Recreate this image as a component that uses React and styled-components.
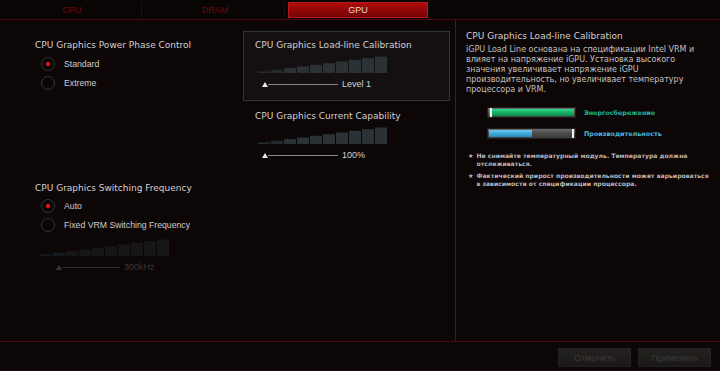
import React from "react";
import styled, { createGlobalStyle } from "styled-components";

const Global = createGlobalStyle`
  html, body {
    margin: 0;
    padding: 0;
    background: #0d0607;
  }
`;

const Screen = styled.div`
  width: 720px;
  height: 371px;
  background: #0d0607;
  display: flex;
  flex-direction: column;
  font-family: "Liberation Sans", Arial, sans-serif;
  overflow: hidden;
`;

const TabBar = styled.div`
  height: 20px;
  box-sizing: border-box;
  padding: 2px 0 0 2px;
  display: flex;
  gap: 3px;
  background: #090505;
  border-bottom: 1px solid #4a0a0b;
  flex-shrink: 0;
`;

const Tab = styled.div`
  width: 140px;
  height: 16px;
  box-sizing: border-box;
  display: flex;
  align-items: center;
  justify-content: center;
  font-size: 9px;
  color: ${(p) => (p.$active ? "#e6d6d6" : "#6a0b0c")};
  background: ${(p) =>
    p.$active ? "linear-gradient(180deg, #b00a0b 0%, #8c0607 60%, #760506 100%)" : "transparent"};
  border: 1px solid ${(p) => (p.$active ? "#b8191a" : "transparent")};
  border-right: 1px solid ${(p) => (p.$active ? "#b8191a" : "#181212")};
`;

const Main = styled.div`
  flex: 1;
  display: flex;
  min-height: 0;
`;

const Settings = styled.div`
  width: 456px;
  box-sizing: border-box;
  flex-shrink: 0;
  border-right: 1px solid #2a2626;
  display: grid;
  grid-template-columns: 243px 1fr;
`;

const Column = styled.div`
  display: flex;
  flex-direction: column;
  padding: ${(p) => p.$pad};
`;

const Group = styled.div`
  display: flex;
  flex-direction: column;
  margin-top: ${(p) => p.$top || 0}px;
`;

const Title = styled.div`
  font-family: "DejaVu Sans", Verdana, sans-serif;
  font-size: 9px;
  line-height: 12px;
  color: #d4d0d0;
  white-space: nowrap;
`;

const RadioList = styled.div`
  display: flex;
  flex-direction: column;
  gap: 5px;
  margin-top: ${(p) => p.$top}px;
  padding-left: 6px;
`;

const RadioRow = styled.label`
  display: flex;
  align-items: center;
  gap: 9px;
  height: 14px;
  font-size: 8.7px;
  color: #d0cccc;
  white-space: nowrap;
`;

const RadioCircle = styled.span`
  width: 14px;
  height: 14px;
  box-sizing: border-box;
  border-radius: 50%;
  border: 1px solid #3a3434;
  background: #0b0606;
  display: flex;
  align-items: center;
  justify-content: center;

  &::after {
    content: "";
    width: 4px;
    height: 4px;
    border-radius: 50%;
    background: ${(p) => (p.$on ? "#ff1010" : "transparent")};
  }
`;

const SliderWrap = styled.div`
  display: flex;
  flex-direction: column;
  margin-top: ${(p) => p.$top}px;
  padding-left: ${(p) => p.$left}px;
`;

const SliderTrack = styled.div`
  display: flex;
  align-items: center;
  height: 10px;
  margin-top: ${(p) => p.$top}px;
`;

const Thumb = styled.span`
  width: 0;
  height: 0;
  margin-left: ${(p) => p.$offset}px;
  border-left: 3px solid transparent;
  border-right: 3px solid transparent;
  border-bottom: 5px solid ${(p) => (p.$dim ? "#3a3a3a" : "#e8e8e8")};
`;

const TrackLine = styled.span`
  width: ${(p) => p.$w}px;
  height: 1px;
  background: ${(p) => (p.$dim ? "#2e2b2b" : "#8a8686")};
`;

const TrackValue = styled.span`
  margin-left: 4px;
  font-size: 9px;
  color: ${(p) => (p.$dim ? "#3a3636" : "#d8d4d4")};
  white-space: nowrap;
`;

const Box = styled.div`
  width: 207px;
  height: 70px;
  box-sizing: border-box;
  border: 1px solid #2d3639;
  background: #141011;
  padding: 7px 0 0 11px;
  display: flex;
  flex-direction: column;
`;

const Plain = styled.div`
  display: flex;
  flex-direction: column;
  margin-top: 9px;
  padding-left: 12px;
`;

const Info = styled.div`
  flex: 1;
  min-width: 0;
  padding: 10px 0 0 10px;
  display: flex;
  flex-direction: column;
`;

const Paragraph = styled.p`
  margin: 3px 0 0;
  font-family: "DejaVu Sans", Verdana, sans-serif;
  font-size: 8px;
  line-height: 10px;
  color: #c4c0c0;
  white-space: nowrap;
`;

const Legend = styled.div`
  display: flex;
  flex-direction: column;
  gap: 10px;
  margin-top: 12px;
  padding-left: 21px;
`;

const LegendRow = styled.div`
  display: flex;
  align-items: center;
  gap: 8px;
  height: 11px;
`;

const Meter = styled.div`
  position: relative;
  width: 89px;
  height: 11px;
  box-sizing: border-box;
  border: 1px solid #1e1e1e;
  background: linear-gradient(180deg, #6a6a6a 0%, #4a4a4a 50%, #3a3a3a 100%);
`;

const MeterFill = styled.div`
  position: absolute;
  top: 1px;
  bottom: 1px;
  left: 1px;
  background: ${(p) => p.$color};
`;

const MeterMark = styled.div`
  position: absolute;
  top: 0;
  bottom: 0;
  width: 2px;
  background: #f4f4f4;
`;

const LegendText = styled.span`
  font-family: "DejaVu Sans", Verdana, sans-serif;
  font-size: 6.4px;
  font-weight: bold;
  color: ${(p) => p.$color};
  white-space: nowrap;
`;

const Notes = styled.div`
  display: flex;
  flex-direction: column;
  gap: 4px;
  margin-top: 13px;
  padding-left: 2px;
`;

const Note = styled.div`
  display: flex;
  gap: 3px;
  font-family: "DejaVu Sans", Verdana, sans-serif;
  font-size: 6.1px;
  font-weight: bold;
  line-height: 8px;
  color: #bcb8b8;
  white-space: nowrap;
`;

const Footer = styled.div`
  height: 30px;
  box-sizing: border-box;
  flex-shrink: 0;
  border-top: 1px solid #4a0a0b;
  border-bottom: 1px solid #2a0606;
  display: flex;
  justify-content: flex-end;
  gap: 7px;
  padding: 6px 9px 0 0;
`;

const Button = styled.button`
  width: 73px;
  height: 19px;
  border: 1px solid #242020;
  background: linear-gradient(180deg, #242121 0%, #1a1717 100%);
  color: #3e3a3a;
  font-family: "Liberation Sans", Arial, sans-serif;
  font-size: 9px;
  padding: 0;
`;

function Ramp({ dim }) {
  const segs = Array.from({ length: 10 }, (_, i) => i);
  return (
    <svg width="130" height="18" viewBox="0 0 130 18">
      {segs.map((i) => {
        const h = 1.6 + i * 1.65;
        let fill = dim ? "#171617" : "#2b3236";
        if (dim && i < 2) fill = "#121b22";
        if (!dim && i < 2) fill = "#222a2e";
        return <rect key={i} x={i * 13} y={18 - h} width="12" height={h} fill={fill} />;
      })}
    </svg>
  );
}

function Slider({ value, dim, top, left = 0, thumb = 4, line = 70 }) {
  return (
    <SliderWrap $top={top} $left={left}>
      <Ramp dim={dim} />
      <SliderTrack $top={6}>
        <Thumb $offset={thumb} $dim={dim} />
        <TrackLine $w={line} $dim={dim} />
        <TrackValue $dim={dim}>{value}</TrackValue>
      </SliderTrack>
    </SliderWrap>
  );
}

function Radio({ label, on }) {
  return (
    <RadioRow>
      <RadioCircle $on={on} />
      {label}
    </RadioRow>
  );
}

export default function App() {
  return (
    <Screen>
      <Global />
      <TabBar>
        <Tab>CPU</Tab>
        <Tab>DRAM</Tab>
        <Tab $active>GPU</Tab>
      </TabBar>

      <Main>
        <Settings>
          <Column $pad="19px 0 0 35px">
            <Group>
              <Title>CPU Graphics Power Phase Control</Title>
              <RadioList $top={6}>
                <Radio label="Standard" on />
                <Radio label="Extreme" />
              </RadioList>
            </Group>
            <Group $top={92}>
              <Title>CPU Graphics Switching Frequency</Title>
              <RadioList $top={5}>
                <Radio label="Auto" on />
                <Radio label="Fixed VRM Switching Frequency" />
              </RadioList>
              <Slider value="300kHz" dim top={6} left={5} thumb={16} line={58} />
            </Group>
          </Column>

          <Column $pad="11px 0 0 0">
            <Box>
              <Title>CPU Graphics Load-line Calibration</Title>
              <Slider value="Level 1" top={4} left={3} />
            </Box>
            <Plain>
              <Title>CPU Graphics Current Capability</Title>
              <Slider value="100%" top={4} left={3} />
            </Plain>
          </Column>
        </Settings>

        <Info>
          <Title>CPU Graphics Load-line Calibration</Title>
          <Paragraph>
            iGPU Load Line основана на спецификации Intel VRM и
            <br />
            влияет на напряжение iGPU. Установка высокого
            <br />
            значения увеличивает напряжение iGPU
            <br />
            производительность, но увеличивает температуру
            <br />
            процессора и VRM.
          </Paragraph>

          <Legend>
            <LegendRow>
              <Meter>
                <MeterFill $color="linear-gradient(180deg, #2fd88a 0%, #13a85e 60%, #0e8a4c 100%)" style={{ right: "1px" }} />
                <MeterMark style={{ left: "2px" }} />
              </Meter>
              <LegendText $color="#1fb894">Энергосбережение</LegendText>
            </LegendRow>
            <LegendRow>
              <Meter>
                <MeterFill $color="linear-gradient(180deg, #6cc8ee 0%, #3aa2d2 60%, #2a86b4 100%)" style={{ width: "43px" }} />
                <MeterMark style={{ left: "84px" }} />
              </Meter>
              <LegendText $color="#4cb4dc">Производительность</LegendText>
            </LegendRow>
          </Legend>

          <Notes>
            <Note>
              <span>★</span>
              <span>
                Не снимайте температурный модуль. Температура должна
                <br />
                отслеживаться.
              </span>
            </Note>
            <Note>
              <span>★</span>
              <span>
                Фактический прирост производительности может варьироваться
                <br />в зависимости от спецификации процессора.
              </span>
            </Note>
          </Notes>
        </Info>
      </Main>

      <Footer>
        <Button>Отменить</Button>
        <Button>Применить</Button>
      </Footer>
    </Screen>
  );
}
